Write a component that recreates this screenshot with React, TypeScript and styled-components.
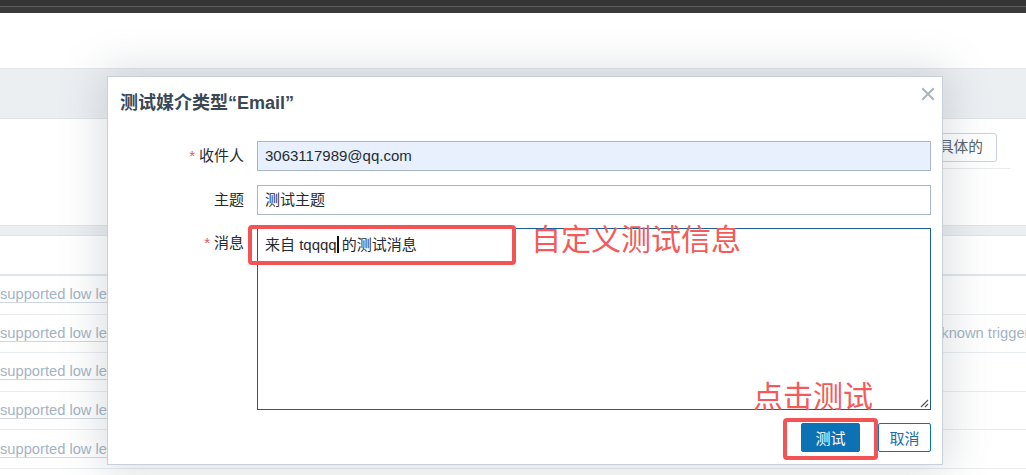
import React from "react";
import styled, { createGlobalStyle } from "styled-components";

const Global = createGlobalStyle`
  html, body { margin: 0; padding: 0; background: #fff; }
  body { width: 1026px; height: 475px; overflow: hidden; font-family: "Liberation Sans", "Noto Sans CJK SC", sans-serif; }
  * { box-sizing: border-box; }
`;

const Page = styled.div`
  position: relative;
  width: 1026px;
  height: 475px;
  overflow: hidden;
  background: #fff;
  display: flex;
  flex-direction: column;
`;

const TopBar = styled.div`
  height: 13px;
  flex: none;
  background: linear-gradient(#343434 0 6px, #5e5e5e 6px 7px, #3a3a3a 7px 13px);
`;

const BlankBar = styled.div`
  height: 56px;
  flex: none;
  background: #fff;
  border-bottom: 1px solid #e3e7ea;
`;

const HeaderBand = styled.div`
  height: 50px;
  flex: none;
  background: #eceff2;
  border-bottom: 1px solid #dfe4e8;
`;

const FilterArea = styled.div`
  height: 106px;
  flex: none;
  background: #fff;
  display: flex;
  flex-direction: column;
  align-items: flex-end;
  padding: 14px 16px 0 0;
`;

const FilterButton = styled.div`
  height: 29px;
  margin-right: 13px;
  padding: 0 13px 0 20px;
  border: 1px solid #cbd3da;
  border-radius: 3px;
  font-size: 14.7px;
  line-height: 27px;
  color: #56626c;
`;

const FilterLine = styled.div`
  width: 80px;
  height: 1px;
  margin-top: 6px;
  background: #e6eaed;
`;

const GapBand = styled.div`
  height: 11px;
  flex: none;
  background: #eceff2;
  border-top: 1px solid #dfe4e8;
  border-bottom: 1px solid #dfe4e8;
`;

const TableHead = styled.div`
  height: 40px;
  flex: none;
  background: #fff;
  border-bottom: 2px solid #e1e6ea;
`;

const Row = styled.div`
  height: 38.6px;
  flex: none;
  display: flex;
  align-items: center;
  justify-content: space-between;
  border-bottom: 1px solid #e9edf0;
  font-size: 14.7px;
  white-space: nowrap;
`;

const LinkText = styled.span`
  color: #a3b4c4;
  border-bottom: 1px solid #cfd8e0;
`;

const RightCell = styled.div`
  width: 101px;
  overflow: hidden;
`;

const Dialog = styled.div`
  position: absolute;
  left: 107px;
  top: 76px;
  width: 836px;
  height: 389px;
  background: #fff;
  border: 1px solid #c8d1d9;
  box-shadow: 0 0 40px 6px rgba(90, 105, 120, 0.22);
  display: flex;
  flex-direction: column;
`;

const DialogHeader = styled.div`
  display: flex;
  justify-content: space-between;
  align-items: flex-start;
  padding: 14px 7px 0 12px;
  height: 64px;
`;

const Title = styled.h3`
  margin: 0;
  font-size: 18px;
  line-height: 24px;
  font-weight: 700;
  color: #3a4855;
`;

const CloseButton = styled.div`
  width: 14px;
  height: 14px;
  margin-top: -4px;
  display: flex;
`;

const Form = styled.div`
  display: grid;
  grid-template-columns: 136px 1fr;
  column-gap: 13px;
  row-gap: 13.5px;
  padding-right: 11px;
`;

const Label = styled.div`
  text-align: right;
  font-size: 15px;
  line-height: 30px;
  color: #1f2c33;
  white-space: nowrap;
`;

const Required = styled.span`
  color: #e45959;
  margin-right: 4px;
`;

const Input = styled.div<{ $autofill?: boolean }>`
  height: 30px;
  border: 1px solid #a9b6c3;
  background: ${(p) => (p.$autofill ? "#e8f0fe" : "#fff")};
  padding: 0 7px;
  font-size: 15px;
  line-height: 28px;
  color: #1f2c33;
  white-space: nowrap;
`;

const TextArea = styled.div`
  position: relative;
  height: 182px;
  border: 1px solid #1d5d97;
  padding: 6px 7px;
  font-size: 15px;
  line-height: 20px;
  color: #1f2c33;
`;

const Caret = styled.span`
  display: inline-block;
  width: 2px;
  height: 17px;
  background: #111;
  vertical-align: -3px;
  margin: 0 3px 0 0;
`;

const Grip = styled.svg`
  position: absolute;
  right: 1px;
  bottom: 1px;
`;

const Footer = styled.div`
  display: flex;
  justify-content: flex-end;
  gap: 18px;
  padding: 13px 11px 0 0;
`;

const Button = styled.button<{ $primary?: boolean; $w: number }>`
  width: ${(p) => p.$w}px;
  height: 29px;
  padding: 0;
  border-radius: 2px;
  font-family: "Liberation Sans", "Noto Sans CJK SC", sans-serif;
  font-size: 15px;
  border: 1px solid #0c72b5;
  background: ${(p) => (p.$primary ? "#0c72b5" : "#fff")};
  color: ${(p) => (p.$primary ? "#fff" : "#1a6fae")};
`;

const RedBox = styled.div<{ $l: number; $t: number; $w: number; $h: number }>`
  position: absolute;
  left: ${(p) => p.$l}px;
  top: ${(p) => p.$t}px;
  width: ${(p) => p.$w}px;
  height: ${(p) => p.$h}px;
  border: 4px solid #f45355;
  border-radius: 4px;
`;

const RedNote = styled.div<{ $l: number; $t: number }>`
  position: absolute;
  left: ${(p) => p.$l}px;
  top: ${(p) => p.$t}px;
  font-family: "Noto Sans CJK SC", sans-serif;
  font-size: 30px;
  line-height: 30px;
  color: #f45a5a;
  white-space: nowrap;
`;

const rows = [0, 1, 2, 3, 4, 5];

export default function App() {
  return (
    <>
      <Global />
      <Page>
        <TopBar />
        <BlankBar />
        <HeaderBand />
        <FilterArea>
          <FilterButton>显示具体的</FilterButton>
          <FilterLine />
        </FilterArea>
        <GapBand />
        <TableHead />
        {rows.map((i) => (
          <Row key={i}>
            {i < 5 ? <LinkText>supported low level discovery rule</LinkText> : <span />}
            <RightCell>{i === 1 ? <LinkText>unknown trigger</LinkText> : null}</RightCell>
          </Row>
        ))}

        <Dialog>
          <DialogHeader>
            <Title>测试媒介类型“Email”</Title>
            <CloseButton>
              <svg width="14" height="14" viewBox="0 0 14 14">
                <path d="M2 2 L12 12 M12 2 L2 12" stroke="#a9b4bd" strokeWidth="2" strokeLinecap="square" />
              </svg>
            </CloseButton>
          </DialogHeader>
          <Form>
            <Label>
              <Required>*</Required>收件人
            </Label>
            <Input $autofill>3063117989@qq.com</Input>
            <Label>主题</Label>
            <Input>测试主题</Input>
            <Label>
              <Required>*</Required>消息
            </Label>
            <TextArea>
              来自 tqqqq<Caret />的测试消息
              <Grip width="10" height="10" viewBox="0 0 10 10">
                <path d="M9 2 L2 9 M9 6 L6 9" stroke="#555" strokeWidth="1.2" />
              </Grip>
            </TextArea>
          </Form>
          <Footer>
            <Button $primary $w={59}>测试</Button>
            <Button $w={53}>取消</Button>
          </Footer>
        </Dialog>

        <RedBox $l={248} $t={225} $w={268} $h={40} />
        <RedNote $l={531} $t={222}>自定义测试信息</RedNote>
        <RedNote $l={753} $t={379}>点击测试</RedNote>
        <RedBox $l={783} $t={418} $w={95} $h={42} />
      </Page>
    </>
  );
}
